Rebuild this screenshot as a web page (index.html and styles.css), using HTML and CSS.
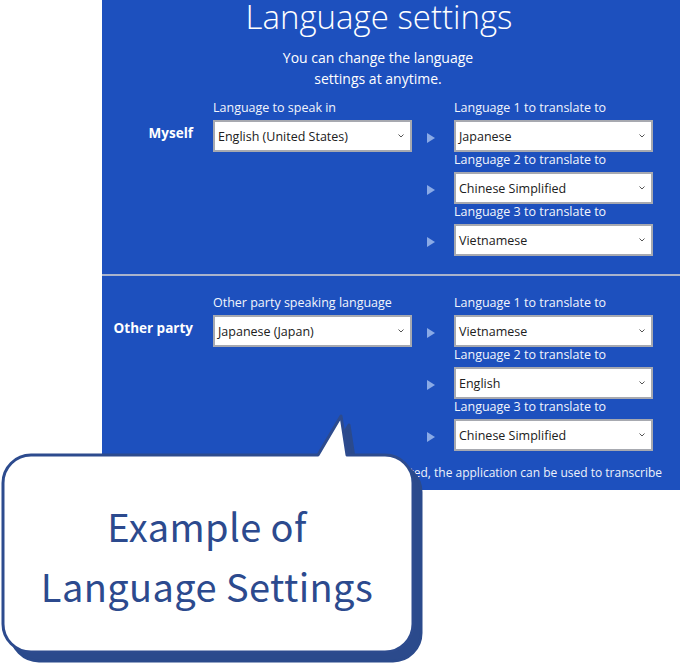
FILE: index.html
```html
<!DOCTYPE html>
<html>
<head>
<meta charset="utf-8">
<link rel="stylesheet" href="styles.css">
</head>
<body>
<div class="page">
  <div class="panel">
    <h1 class="title">Language settings</h1>
    <p class="subtitle">You can change the language<br>settings at anytime.</p>

    <section class="group">
      <div class="name">Myself</div>
      <div class="field src">
        <div class="label">Language to speak in</div>
        <div class="select"><span>English (United States)</span><svg class="chev" viewBox="0 0 6 4"><polyline points="0.5,0.5 3,3 5.5,0.5"/></svg></div>
      </div>
      <div class="arrow a1"><i></i></div>
      <div class="arrow a2"><i></i></div>
      <div class="arrow a3"><i></i></div>
      <div class="field t1">
        <div class="label">Language 1 to translate to</div>
        <div class="select"><span>Japanese</span><svg class="chev" viewBox="0 0 6 4"><polyline points="0.5,0.5 3,3 5.5,0.5"/></svg></div>
      </div>
      <div class="field t2">
        <div class="label">Language 2 to translate to</div>
        <div class="select"><span>Chinese Simplified</span><svg class="chev" viewBox="0 0 6 4"><polyline points="0.5,0.5 3,3 5.5,0.5"/></svg></div>
      </div>
      <div class="field t3">
        <div class="label">Language 3 to translate to</div>
        <div class="select"><span>Vietnamese</span><svg class="chev" viewBox="0 0 6 4"><polyline points="0.5,0.5 3,3 5.5,0.5"/></svg></div>
      </div>
    </section>

    <div class="divider"></div>

    <section class="group second">
      <div class="name">Other party</div>
      <div class="field src">
        <div class="label">Other party speaking language</div>
        <div class="select"><span>Japanese (Japan)</span><svg class="chev" viewBox="0 0 6 4"><polyline points="0.5,0.5 3,3 5.5,0.5"/></svg></div>
      </div>
      <div class="arrow a1"><i></i></div>
      <div class="arrow a2"><i></i></div>
      <div class="arrow a3"><i></i></div>
      <div class="field t1">
        <div class="label">Language 1 to translate to</div>
        <div class="select"><span>Vietnamese</span><svg class="chev" viewBox="0 0 6 4"><polyline points="0.5,0.5 3,3 5.5,0.5"/></svg></div>
      </div>
      <div class="field t2">
        <div class="label">Language 2 to translate to</div>
        <div class="select"><span>English</span><svg class="chev" viewBox="0 0 6 4"><polyline points="0.5,0.5 3,3 5.5,0.5"/></svg></div>
      </div>
      <div class="field t3">
        <div class="label">Language 3 to translate to</div>
        <div class="select"><span>Chinese Simplified</span><svg class="chev" viewBox="0 0 6 4"><polyline points="0.5,0.5 3,3 5.5,0.5"/></svg></div>
      </div>
    </section>

    <p class="footnote">When no translation language is selected, the application can be used to transcribe</p>
  </div>

  <div class="callout">
    <svg class="bubble" viewBox="0 0 430 261" width="430" height="261">
      <path class="shadow" transform="translate(8,9)" d="M31,50 L318,50 L341,11 L347,50 L385,50 A28,28 0 0 1 413,78 L413,219 A28,28 0 0 1 385,247 L31,247 A28,28 0 0 1 3,219 L3,78 A28,28 0 0 1 31,50 Z"/>
      <path class="face" d="M31,50 L318,50 L341,11 L347,50 L385,50 A28,28 0 0 1 413,78 L413,219 A28,28 0 0 1 385,247 L31,247 A28,28 0 0 1 3,219 L3,78 A28,28 0 0 1 31,50 Z"/>
    </svg>
    <div class="callout-text">Example of<br>Language Settings</div>
  </div>
</div>
</body>
</html>
```

FILE: styles.css
```css
* { box-sizing: border-box; }
html, body { margin: 0; padding: 0; background: #ffffff; }
.page {
  position: relative;
  width: 681px;
  height: 666px;
  overflow: hidden;
}
.panel {
  margin-left: 102px;
  width: 578px;
  height: 490px;
  background: #1d50be;
  color: #ffffff;
  font-family: "Open Sans", "Noto Sans", sans-serif;
  overflow: hidden;
}
.title {
  margin: 0;
  font-weight: 300;
  font-size: 33px;
  line-height: 34px;
  text-align: center;
  padding-right: 24px;
}
.subtitle {
  margin: 13px 0 0;
  font-size: 14px;
  line-height: 21px;
  text-align: center;
  padding-right: 26px;
}
.group {
  display: grid;
  grid-template-columns: 111px 199px 42px 199px;
  grid-template-rows: 52px 52px 52px;
  margin-top: 11px;
}
.group.second { margin-top: 19px; }
.name {
  grid-column: 1;
  grid-row: 1;
  padding-top: 13px;
  padding-right: 20px;
  height: 52px;
  display: flex;
  align-items: center;
  justify-content: flex-end;
  font-weight: 700;
  font-size: 13.5px;
}
.field.src { grid-column: 2; grid-row: 1; }
.field.t1 { grid-column: 4; grid-row: 1; }
.field.t2 { grid-column: 4; grid-row: 2; }
.field.t3 { grid-column: 4; grid-row: 3; }
.arrow {
  grid-column: 3;
  padding-top: 20px;
  padding-left: 15px;
  height: 52px;
  display: flex;
  align-items: center;
}
.arrow.a1 { grid-row: 1; }
.arrow.a2 { grid-row: 2; }
.arrow.a3 { grid-row: 3; }
.arrow i {
  display: block;
  width: 0;
  height: 0;
  margin-top: 4px;
  border-left: 8px solid #8aaae6;
  border-top: 5px solid transparent;
  border-bottom: 5px solid transparent;
}
.label {
  font-size: 12.5px;
  line-height: 16px;
  height: 16px;
  margin-bottom: 4px;
  white-space: nowrap;
  color: #f2f5fc;
}
.select {
  height: 32px;
  background: #ffffff;
  border: 2px solid #a7a9b0;
  display: flex;
  align-items: center;
  justify-content: space-between;
  padding: 0 6px 0 3px;
  color: #202020;
  font-size: 12.5px;
}
.chev {
  width: 6px;
  height: 4px;
  fill: none;
  stroke: #555555;
  stroke-width: 1;
}
.divider {
  height: 2px;
  background: #a9b3cc;
  margin-top: 18px;
}
.footnote {
  margin: 13px 0 0;
  font-size: 12px;
  line-height: 18px;
  white-space: nowrap;
  text-align: right;
  padding-right: 18px;
  color: #eef2fb;
}
.callout {
  position: absolute;
  left: 0;
  top: 405px;
  width: 430px;
  height: 261px;
}
.bubble {
  position: absolute;
  left: 0;
  top: 0;
}
.shadow {
  fill: #2b4a8c;
  stroke: #2b4a8c;
  stroke-width: 3;
  stroke-linejoin: round;
}
.face {
  fill: #ffffff;
  stroke: #2d4b8e;
  stroke-width: 3;
  stroke-linejoin: round;
}
.callout-text {
  position: absolute;
  left: 2px;
  top: 91px;
  width: 410px;
  text-align: center;
  font-family: "Noto Sans CJK JP", "Noto Sans", sans-serif;
  font-size: 38px;
  line-height: 60px;
  letter-spacing: 0.4px;
  color: #2c4a8e;
}
```
